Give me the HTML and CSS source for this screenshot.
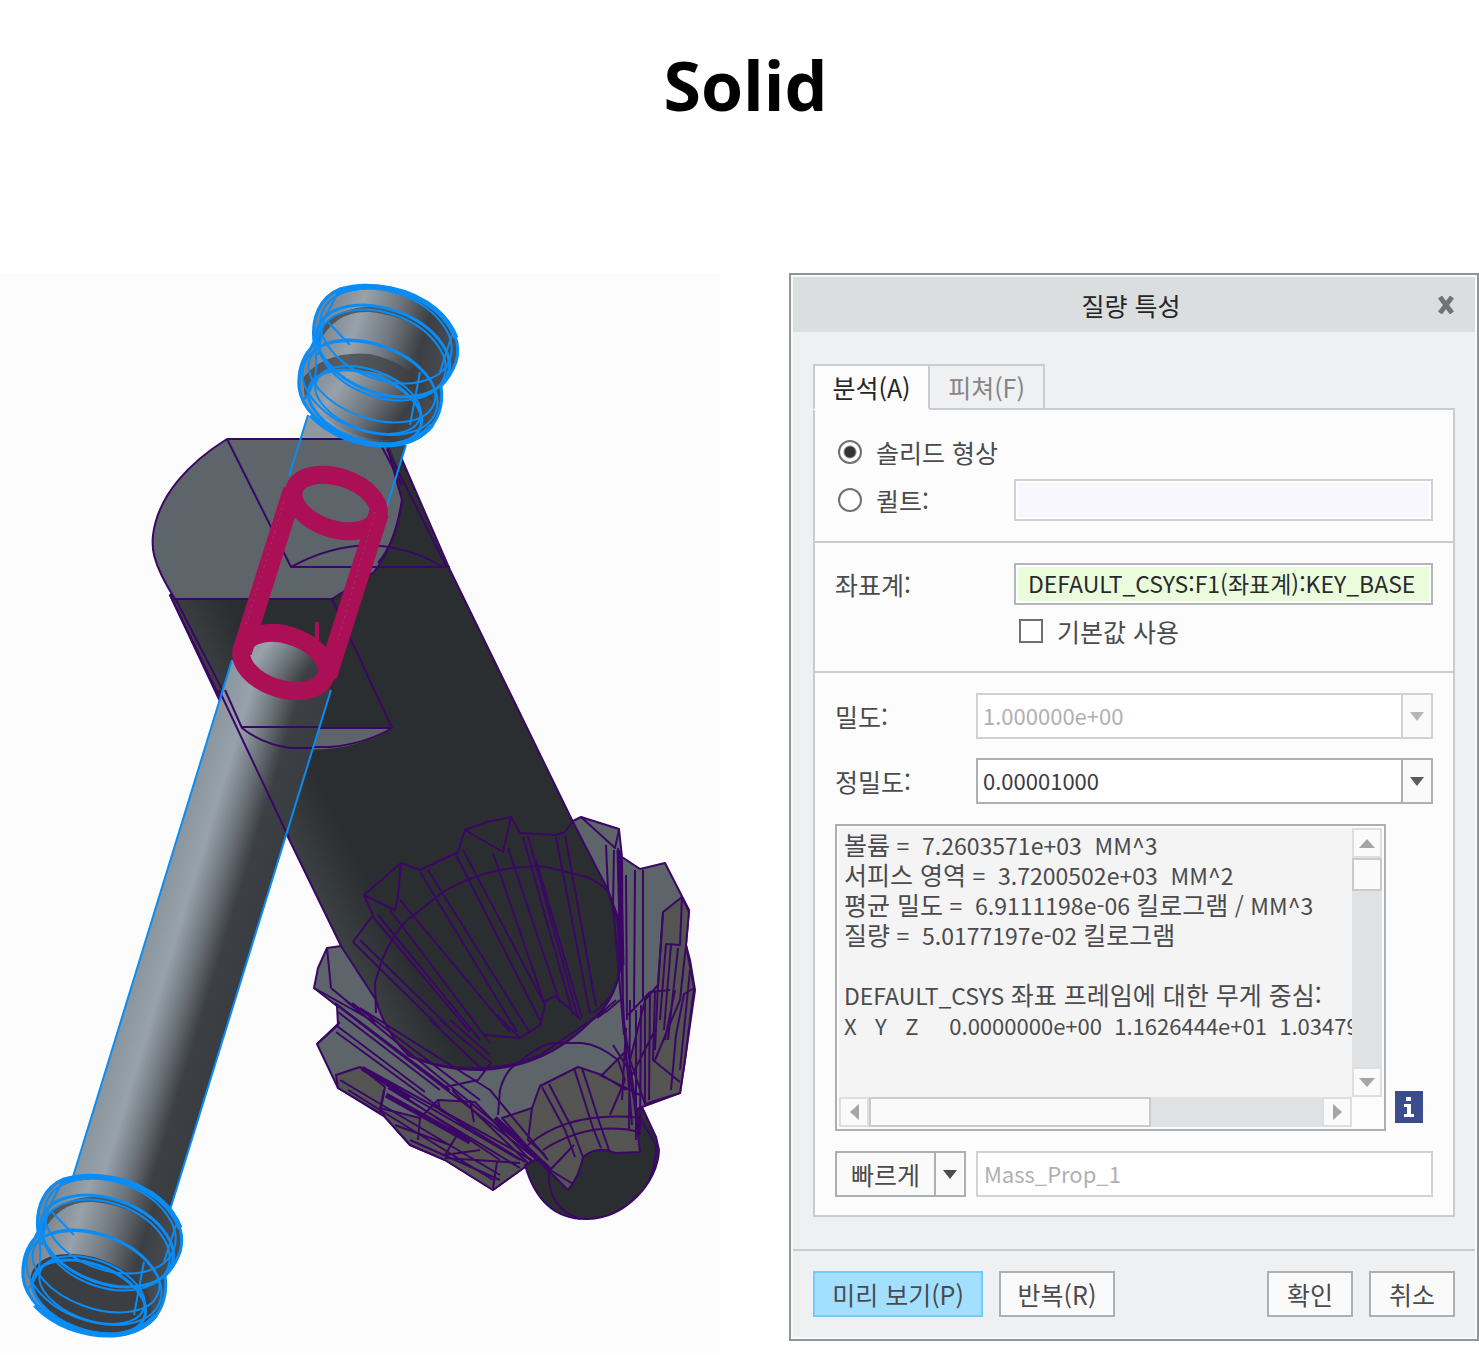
FILE: index.html
```html
<!DOCTYPE html>
<html lang="ko">
<head>
<meta charset="utf-8">
<meta name="viewport" content="width=device-width, initial-scale=1">
<title>Solid</title>
<link rel="stylesheet" href="styles.css">
</head>
<body>
<h1 class="page-title">Solid</h1>
<main class="layout">
<svg class="model" viewBox="0 273 720 1081" role="img" aria-label="Solid">
  <defs>
    <linearGradient id="shaft" gradientUnits="userSpaceOnUse" x1="159" y1="900" x2="251" y2="928">
      <stop offset="0" stop-color="#8a959e"/><stop offset=".28" stop-color="#98a2ab"/><stop offset=".5" stop-color="#737b82"/><stop offset=".78" stop-color="#3c3f43"/><stop offset="1" stop-color="#3a3d41"/>
    </linearGradient>
    <linearGradient id="collar" gradientUnits="userSpaceOnUse" x1="310" y1="360" x2="440" y2="400">
      <stop offset="0" stop-color="#7b848c"/><stop offset=".25" stop-color="#98a2ab"/><stop offset=".5" stop-color="#70777e"/><stop offset=".75" stop-color="#3c3f43"/><stop offset="1" stop-color="#4a4e53"/>
    </linearGradient>
    <linearGradient id="body" gradientUnits="userSpaceOnUse" x1="312" y1="890" x2="360" y2="866">
      <stop offset="0" stop-color="#3c4144"/><stop offset="1" stop-color="#2b2e30"/>
    </linearGradient>
    <path id="collar-shape" d="M314 342C311 318 320 297 340 289C372 279 412 290 436 310C456 328 461 345 456 362Q451 376 441 386C444 405 438 422 425 433C408 448 378 449 350 439C322 428 301 408 299 387C298 371 303 357 311 348Z"/>
    <g id="rings" fill="none" stroke="#0a8cf5" stroke-width="2">
      <use href="#collar-shape" stroke-width="3"/>
      <path stroke-width="5" d="M335 293C372 279 412 290 436 310Q450 322 456 338M311 415C330 435 358 446 390 445Q418 442 432 425"/>
      <ellipse cx="386" cy="336" rx="68" ry="44" transform="rotate(20 386 336)"/>
      <ellipse cx="383" cy="351" rx="69" ry="42" transform="rotate(20 383 351)" stroke-width="3"/>
      <ellipse cx="382" cy="355" rx="66" ry="42" transform="rotate(20 382 355)"/>
      <ellipse cx="372" cy="381" rx="66" ry="37" transform="rotate(20 372 381)"/>
      <ellipse cx="370" cy="388" rx="70" ry="43" transform="rotate(20 370 388)"/>
      <ellipse cx="365" cy="407" rx="59" ry="33" transform="rotate(20 365 407)" stroke-width="3"/>
      <ellipse cx="368" cy="400" rx="55" ry="30" transform="rotate(20 368 400)"/>
      <path d="M318 355L324 320L336 296M328 322L350 345M452 335L440 372M420 372L410 425M303 400Q322 380 314 342"/>
    </g>
  </defs>
  <rect class="canvas" y="273" width="720" height="1081"/>
  <g stroke="#3b0764" stroke-width="2" stroke-linejoin="round">
    <path fill="#5d656a" d="M341 946L327 948L318 968L314 988L337 1006L338 1025L317 1044L338 1088L385 1117L410 1145L445 1160L493 1190L523 1168L642 1107L680 1093L685 1060L695 990L690 960L686 945L689 910L665 863L640 869L622 857L619 829L581 817L573 821Z"/>
    <path fill="#545452" d="M336 1075L360 1067L385 1087L380 1113L338 1088ZM385 1117L380 1108L420 1118L438 1100L475 1102L532 1162L493 1190L445 1160L410 1145ZM663 912L682 897L689 912L686 945L694 988L685 1060L680 1093L645 1104L630 1060L645 1000L658 985Z"/>
    <path fill="#2b2e30" d="M525 1165C535 1200 555 1220 588 1219C625 1218 658 1183 659 1150L656 1137L642 1107Z"/>
    <path fill="#545452" d="M502 1118L532 1108L540 1086L578 1067L602 1075L625 1052L634 1100L640 1152L615 1153Q598 1145 583 1157Q580 1175 568 1190L548 1170Z"/>
    <path fill="url(#body)" d="M388 441L170 595L287 835L341 946L376 1000Q385 1032 408 1055Q440 1070 480 1070Q545 1068 590 1022Q618 1000 621 960L619 920L608 890L573 822L450 570L400 455Z"/>
    <path fill="#5d656a" d="M227 439H385L402 500Q395 545 374 572L332 599H175C150 560 152 545 153 535C158 495 190 462 227 439Z"/>
    <path fill="#5d656a" stroke="none" d="M242 728H392C350 755 285 758 242 728Z"/>
    <path fill="none" d="M227 439L291 567H450M291 567Q370 524 443 567M332 599L392 728H242Q262 744 290 747H330Q365 744 392 728M170 595L225 712M175 598L242 728M387 449L447 568M382 447L402 485M402 500Q397 540 378 563"/>
    <g fill="none">
      <path d="M353 942L373 915L364 895L401 863L420 870L458 852L461 842L465 830L487 822L511 817L520 833L556 835L565 832L573 821M364 895L395 910L398 897L401 863M465 830L503 852L511 817M376 1013L375 983L382 960Q395 930 410 918L443 892Q470 876 500 870Q530 865 547 867L587 877Q608 887 610 897L618 923L620 967Q618 995 593 1013"/>
      <path d="M353 942L440 1028M360 940L452 1030M373 917L470 1032M378 915L480 1040M390 910L490 1043M400 900L510 1032M420 872L517 1032M428 870L530 1033M455 853L540 1020M463 850L545 1005M493 853L544 1002M508 848L560 1003M523 837L573 1015M528 836L578 1018M536 860L582 1018M556 837L590 1014M565 835L596 1006M544 1002L555 996L571 1010L581 1020M430 1020L485 1072M440 1020L491 1063L478 1080L445 1087M450 1020L490 1055M485 1035L520 1038L540 1025L545 1005M497 1015L520 1038"/>
      <path d="M498 1115L500 1090Q505 1070 518 1063Q534 1048 552 1043H582Q600 1045 618 1060L625 1080M408 1055Q440 1070 480 1068Q510 1068 540 1055L606 1010M601 1013L616 1000M532 1108L528 1140L545 1155M542 1087L565 1130L575 1157M549 1084L572 1128L583 1157M574 1068L593 1128L601 1148M582 1068L600 1124L609 1150M528 1145Q570 1110 642 1118M543 1150Q590 1120 640 1132M602 1075L626 1090M550 1170L574 1145M550 1170L573 1184M549 1168Q546 1208 580 1219M640 1118L656 1145Q656 1165 649 1180M600 1075L640 1095M610 1115L625 1080"/>
      <path d="M327 948L331 988M314 988L375 1022M331 988L376 1025M335 1003L450 1090M338 1012L440 1090M337 1026L425 1092M317 1044L340 1022M336 1032L470 1130M338 1006L540 1162M345 1000L548 1166M352 1003L480 1100M360 1008L490 1090L548 1160M360 1067L520 1160M368 1070L532 1160M372 1075L500 1160M340 1080L500 1175M348 1090L493 1180M388 1088L520 1168M384 1090L380 1110M420 1118L418 1140M438 1100L440 1110L525 1162M452 1090L530 1165M470 1100L474 1122M457 1135L445 1155L480 1150M497 1162L493 1188M395 1125L450 1145M410 1140L500 1180M445 1158L520 1163"/>
      <path d="M581 817L615 848L619 830M608 890L606 845M614 850L613 905L624 1035M618 848L621 960L625 1040L632 1125M622 857L623 1015L640 1135M626 875L627 1020M635 870L634 1010M643 870L643 1000M663 912L658 985L655 1050M682 897L680 945L666 944L660 1020M671 945L664 1030M678 948L668 1040M686 945L680 1000L655 1060M694 988L684 994L676 1035L671 1090M690 970L680 1070M645 1000L645 1104M650 992L649 1100M655 992L653 1060L680 1082M628 1015L650 992L670 990M613 1045L632 1075L655 1030M630 1000L629 1130M636 1010L636 1140M641 1005L640 1130M626 1028L622 1100M675 990L665 1040M606 1012L620 1000M608 1010L597 1018"/>
      <path stroke-width="5" d="M386 1095L470 1142M495 1118L550 1170M619 850L622 965M362 1068L410 1098"/>
    </g>
  </g>
  <path fill="url(#shaft)" d="M232 660L72 1180Q110 1210 170 1210L331 690Z"/>
  <path fill="#8f99a2" d="M308 415L301 439H385L406 445Z"/>
  <path fill="#3f4448" d="M388 443L406 445L399 470Z"/>
  <path fill="none" stroke="#3b0764" stroke-width="2" d="M219 690L289 838M225 690L242 728Q262 744 290 748H314M242 727H318M227 439H345"/>
  <path fill="none" stroke="#0a8cf5" stroke-width="2" d="M308 415L289 476M406 445L387 506M232 660L72 1180M331 690L170 1210"/>
  <use href="#collar-shape" fill="url(#collar)"/>
  <path fill="#3c3f43" opacity=".7" d="M316 338Q330 306 378 306Q430 316 450 353Q420 317 370 312Q334 310 318 345ZM303 378Q325 350 370 354Q420 365 436 405Q405 375 365 371Q320 370 305 400Z"/>
  <ellipse cx="365" cy="405" rx="57" ry="31" transform="rotate(20 365 405)" fill="url(#collar)"/>
  <use href="#rings"/>
  <g transform="translate(-276 890)">
    <use href="#collar-shape" fill="url(#collar)"/>
    <path fill="#3c3f43" opacity=".7" d="M316 338Q330 306 378 306Q430 316 450 353Q420 317 370 312Q334 310 318 345Z"/>
    <ellipse cx="367" cy="404" rx="63" ry="36" transform="rotate(20 367 404)" fill="#3b3e42"/>
    <use href="#rings"/>
  </g>
  <ellipse cx="285" cy="662" rx="40" ry="24" transform="rotate(18 285 662)" fill="url(#shaft)"/>
  <g fill="none" stroke="#ab0f56">
    <ellipse cx="336" cy="503" rx="44" ry="26" stroke-width="18" transform="rotate(18 336 503)"/>
    <ellipse cx="284" cy="662" rx="44" ry="27" stroke-width="18" transform="rotate(18 284 662)"/>
    <path stroke-width="20" d="M293 490L242 652M379 513L327 676"/>
    <path stroke-width="4" d="M317 622V642"/>
    <path stroke="#8f3f66" stroke-width="1" stroke-dasharray="2 4" d="M284 502L246 625M375 512L338 640"/>
  </g>
</svg>

<section class="dialog" aria-labelledby="dialog-title">
  <header class="dialog-header">
    <h2 class="dialog-title" id="dialog-title">질량 특성</h2>
    <button class="close" type="button" aria-label="닫기"><svg width="18" height="18" viewBox="0 0 18 18"><path d="M3 1L15 17M15 1L3 17" stroke="#717477" stroke-width="5"/></svg></button>
  </header>
  <div class="dialog-body">
    <div class="tabs" role="tablist">
      <button class="tab tab-active" type="button" role="tab" aria-selected="true">분석(A)</button>
      <button class="tab" type="button" role="tab" aria-selected="false">피쳐(F)</button>
    </div>
    <div class="panel" role="tabpanel">
      <div class="group">
        <label class="choice choice-solid"><input class="radio" type="radio" name="kind" checked>솔리드 형상</label>
        <div class="row">
          <label class="choice"><input class="radio" type="radio" name="kind">퀼트:</label>
          <input class="field field-quilt" type="text" aria-label="퀼트">
        </div>
      </div>
      <div class="group">
        <div class="row">
          <label for="csys">좌표계:</label>
          <input class="field field-csys" id="csys" type="text" value="DEFAULT_CSYS:F1(좌표계):KEY_BASE">
        </div>
        <label class="choice choice-default"><input class="check" type="checkbox">기본값 사용</label>
      </div>
      <div class="group group-result">
        <div class="row row-value">
          <label for="density">밀도:</label>
          <div class="combo combo-off">
            <select class="combo-select" id="density" disabled><option>1.000000e+00</option></select>
            <span class="combo-arrow"><svg width="14" height="9" viewBox="0 0 14 9"><path fill="currentColor" d="M0 0H14L7 9Z"/></svg></span>
          </div>
        </div>
        <div class="row row-value">
          <label for="accuracy">정밀도:</label>
          <div class="combo">
            <select class="combo-select" id="accuracy"><option>0.00001000</option></select>
            <span class="combo-arrow"><svg width="14" height="9" viewBox="0 0 14 9"><path fill="currentColor" d="M0 0H14L7 9Z"/></svg></span>
          </div>
        </div>
        <div class="result">
          <div class="result-box">
            <pre class="result-text" tabindex="0" aria-label="결과"><span class="ko">볼륨</span> =  7.2603571e+03  MM^3
<span class="ko">서피스 영역</span> =  3.7200502e+03  MM^2
<span class="ko">평균 밀도</span> =  6.9111198e-06 <span class="ko">킬로그램</span> / MM^3
<span class="ko">질량</span> =  5.0177197e-02 <span class="ko">킬로그램</span>

DEFAULT_CSYS <span class="ko">좌표 프레임에 대한 무게 중심:</span>
<span class="vector">X   Y   Z     0.0000000e+00  1.1626444e+01  1.03479</span></pre>
            <div class="scroll scroll-y">
              <button class="scroll-btn" type="button" aria-label="위로"><svg width="16" height="9" viewBox="0 0 16 9"><path fill="#a3a5a7" d="M0 9H16L8 0Z"/></svg></button>
              <div class="thumb"></div>
              <button class="scroll-btn scroll-end" type="button" aria-label="아래로"><svg width="16" height="9" viewBox="0 0 16 9"><path fill="#a3a5a7" d="M0 0H16L8 9Z"/></svg></button>
            </div>
            <div class="scroll scroll-x">
              <button class="scroll-btn" type="button" aria-label="왼쪽"><svg width="9" height="16" viewBox="0 0 9 16"><path fill="#a3a5a7" d="M9 0V16L0 8Z"/></svg></button>
              <div class="thumb"></div>
              <button class="scroll-btn scroll-end" type="button" aria-label="오른쪽"><svg width="9" height="16" viewBox="0 0 9 16"><path fill="#a3a5a7" d="M0 0V16L9 8Z"/></svg></button>
            </div>
          </div>
          <button class="info" type="button" aria-label="정보"><svg width="28" height="32" viewBox="0 0 28 32"><path fill="#3b4d8c" d="M0 0H28V32H0Z"/><path fill="#fff" d="M11 6H16V10H11ZM9 13H16V23H19V26H9V23H12V16H9Z"/></svg></button>
        </div>
        <div class="row row-value row-name">
          <div class="split">
            <button class="split-main" type="button">빠르게</button>
            <button class="split-arrow" type="button" aria-label="유형 선택"><svg width="14" height="9" viewBox="0 0 14 9"><path fill="currentColor" d="M0 0H14L7 9Z"/></svg></button>
          </div>
          <input class="field field-name" type="text" value="Mass_Prop_1" aria-label="이름" disabled>
        </div>
      </div>
    </div>
  </div>
  <footer class="dialog-footer">
    <button class="button button-primary" type="button">미리 보기(P)</button>
    <button class="button button-repeat" type="button">반복(R)</button>
    <button class="button button-ok" type="button">확인</button>
    <button class="button" type="button">취소</button>
  </footer>
</section>
</main>
</body>
</html>
```
FILE: styles.css
```css
* { box-sizing: border-box; }
body {
  margin: 0;
  background: #fff;
  color: #4b4b4d;
  font: 25px/30px "Noto Sans CJK KR", "Noto Sans", sans-serif;
}
button, input, select { font: inherit; color: inherit; margin: 0; border-radius: 0; }
button { padding: 0; }
svg { display: block; }

.page-title {
  margin: 0;
  padding: 37px 0 140px 12px;
  color: #000;
  font: 700 68px/96px "Open Sans", "Noto Sans", sans-serif;
  text-align: center;
}
.layout {
  display: grid;
  grid-template-columns: 720fr 690fr;
  gap: 69px;
  align-items: start;
}
.model { width: 100%; height: auto; }
.canvas { fill: #fcfcfc; }

.dialog {
  min-width: 0;
  border: 2px solid #929597;
  padding: 2px;
  background: #eef0f2;
  box-shadow: inset 0 0 0 2px #f8f9fa;
}
.dialog-header {
  display: grid;
  grid-template-columns: 46px 1fr 46px;
  align-items: center;
  height: 55px;
  padding-right: 6px;
  background: #dadedf;
}
.dialog-title {
  grid-column: 2;
  margin: 0;
  color: #252527;
  font-size: 25px;
  font-weight: 400;
  text-align: center;
}
.close { justify-self: center; border: 0; background: none; }
.dialog-body { padding: 32px 20px; }
.tabs { display: flex; }
.tab {
  width: 115px;
  height: 46px;
  border: 2px solid #c8ccd0;
  border-left: 0;
  background: #eef0f2;
  color: #858588;
}
.tab-active {
  width: 117px;
  border-left: 2px solid #c8ccd0;
  border-bottom-color: #fcfcfc;
  background: #fcfcfc;
  color: #252527;
  z-index: 1;
}
.panel { margin-top: -2px; border: 2px solid #c8ccd0; background: #fcfcfc; }
.group { padding: 20px; }
.group + .group { border-top: 2px solid #c8ccd0; }
.group-result { padding-bottom: 18px; }
.row { display: grid; grid-template-columns: 179px 1fr; align-items: center; }
.row-value { grid-template-columns: 131px 1fr; column-gap: 10px; margin-bottom: 19px; }
.row-name { margin-bottom: 0; }
.choice { display: flex; align-items: center; gap: 14px; padding-left: 3px; }
.choice-solid { height: 44px; margin-bottom: 5px; }
.choice-default { height: 40px; margin-top: 6px; padding-left: 184px; }
.radio, .check { appearance: none; width: 24px; height: 24px; border: 2px solid #707072; background: #fff; }
.radio { border-radius: 50%; }
.radio:checked { background: radial-gradient(circle, #333 0 5px, #fff 7px); }

.field {
  width: 100%;
  min-width: 0;
  height: 42px;
  border: 2px solid #cfd3d7;
  padding: 0 6px 3px;
  font-size: 22px;
}
.field-quilt { background: #f9f7fe; box-shadow: inset 0 0 0 2px #fff; }
.field-csys {
  border-color: #b3b7ba;
  padding: 0 12px 3px;
  background: #eafcdc;
  color: #2a2a2c;
  font-size: 23px;
  box-shadow: inset 0 0 0 2px #fff;
}
.field-name { height: 46px; background: #fff; color: #b0b0b2; }

.combo { display: grid; height: 46px; border: 2px solid #acb0b3; background: #fff; color: #5b5b5d; }
.combo-select {
  grid-area: 1 / 1;
  appearance: none;
  border: 0;
  padding: 0 40px 3px 5px;
  background: none;
  color: #3c3c3e;
  font-size: 22px;
}
.combo-arrow {
  grid-area: 1 / 1;
  justify-self: end;
  display: grid;
  place-items: center;
  width: 30px;
  border-left: 2px solid #acb0b3;
  background: #fafafa;
  pointer-events: none;
}
.combo-off, .combo-off .combo-arrow { border-color: #cfd3d5; color: #b4b6b8; }
.combo-off .combo-select { color: #b0b0b2; opacity: 1; }

.result { display: grid; grid-template-columns: 1fr 38px; gap: 9px; align-items: end; margin: 20px 0; }
.result-box {
  display: grid;
  grid-template-columns: minmax(0, 1fr) 30px;
  grid-template-rows: 269px 30px;
  border: 2px solid #acb0b3;
  padding: 2px;
  background: #fcfcfc;
}
.result-text {
  margin: 0;
  padding: 2px 0 0 5px;
  overflow: hidden;
  background: #f4f4f4;
  font-family: inherit;
  font-size: 23px;
}
.ko { font-size: 25px; line-height: 1; }
.vector { font-size: 22px; line-height: 1; }
.scroll { display: flex; background: #dfe1e3; }
.scroll-y { flex-direction: column; }
.scroll-btn { display: grid; place-items: center; flex: 0 0 30px; border: 2px solid #dcdee0; background: #fafafa; }
.scroll-end { margin-left: auto; }
.scroll-y .scroll-end { margin: auto 0 0; }
.thumb { border: 2px solid #c8cacc; background: #fafafa; }
.scroll-y .thumb { height: 33px; }
.scroll-x .thumb { width: 55%; }
.info { width: 28px; border: 0; margin-bottom: 8px; background: none; }

.split { display: flex; height: 46px; border: 2px solid #acb0b3; background: #fafafa; }
.split-main { flex: 1; border: 0; background: none; }
.split-arrow { display: grid; place-items: center; width: 30px; border: 0; border-left: 2px solid #acb0b3; background: none; }

.dialog-footer { display: flex; gap: 16px; border-top: 2px solid #c8ccd0; padding: 20px; }
.button { min-width: 86px; height: 46px; border: 2px solid #acb0b3; background: #fafafa; white-space: nowrap; }
.button-primary { min-width: 170px; border-color: #6fccfb; background: #a3e0ff; }
.button-repeat { min-width: 116px; }
.button-ok { margin-left: auto; }
```
